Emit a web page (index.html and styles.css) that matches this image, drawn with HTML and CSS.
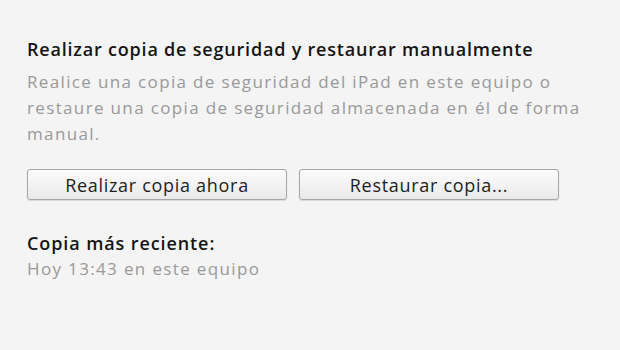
FILE: index.html
```html
<!DOCTYPE html>
<html lang="es">
<head>
<meta charset="utf-8">
<link rel="stylesheet" href="styles.css">
</head>
<body>
<main class="panel">
  <h2 class="title">Realizar copia de seguridad y restaurar manualmente</h2>
  <p class="desc">Realice una copia de seguridad del iPad en este equipo o restaure una copia de seguridad almacenada en él de forma manual.</p>
  <div class="actions">
    <button class="btn">Realizar copia ahora</button>
    <button class="btn">Restaurar copia...</button>
  </div>
  <h3 class="label">Copia más reciente:</h3>
  <p class="info">Hoy 13:43 en este equipo</p>
</main>
</body>
</html>
```
FILE: styles.css
```css
html, body {
  margin: 0;
  padding: 0;
  background: #f4f4f4;
  height: 100%;
}
.panel {
  font-family: "Open Sans", "Noto Sans", sans-serif;
  padding: 36px 0 0 27px;
  width: 565px;
}
.title {
  margin: 0;
  font-size: 18px;
  font-weight: 600;
  letter-spacing: 0.8px;
  line-height: 26px;
  color: #141414;
}
.desc {
  margin: 7px 0 0;
  font-size: 17px;
  letter-spacing: 1.35px;
  line-height: 26px;
  color: #999999;
}
.actions {
  display: flex;
  gap: 12px;
  margin-top: 22px;
}
.btn {
  width: 260px;
  height: 31px;
  box-sizing: border-box;
  font-family: inherit;
  font-size: 18px;
  letter-spacing: 0.7px;
  color: #1e1e1e;
  border: 1px solid #a6a6a6;
  border-radius: 3px;
  background: linear-gradient(#fcfcfc, #eaeaea);
  box-shadow: 0 1px 1px rgba(0,0,0,0.12);
  padding: 0;
}
.label {
  margin: 30px 0 0;
  font-size: 18px;
  font-weight: 600;
  letter-spacing: 0.9px;
  line-height: 26px;
  color: #141414;
}
.info {
  margin: 0;
  font-size: 17px;
  letter-spacing: 1.35px;
  line-height: 26px;
  color: #999999;
}
```
